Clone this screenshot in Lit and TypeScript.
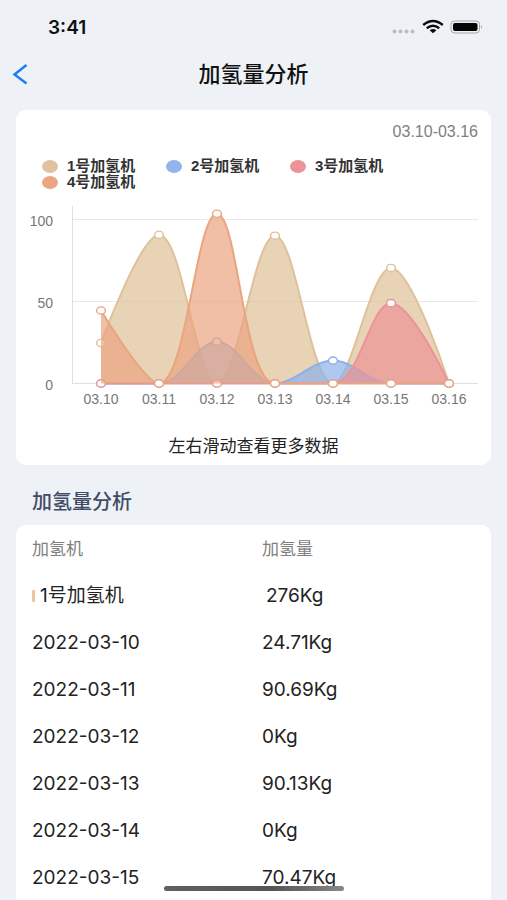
import { LitElement, html, svg, css } from "lit";
import { customElement, property } from "lit/decorators.js";

interface Series {
  name: string;
  tone: string;
  values: number[];
}

type Point = [number, number];

const DAYS = ["03.10", "03.11", "03.12", "03.13", "03.14", "03.15", "03.16"];

const SERIES: Series[] = [
  { name: "1号加氢机", tone: "sand", values: [24.71, 90.69, 0, 90.13, 0, 70.47, 0] },
  { name: "2号加氢机", tone: "blue", values: [0, 0, 25.5, 0, 14, 0, 0] },
  { name: "3号加氢机", tone: "rose", values: [0, 0, 0, 0, 0, 49, 0] },
  { name: "4号加氢机", tone: "coral", values: [44.5, 0, 103.5, 0, 0, 0, 0] },
];

const ROWS: [string, string][] = [
  ["2022-03-10", "24.71Kg"],
  ["2022-03-11", "90.69Kg"],
  ["2022-03-12", "0Kg"],
  ["2022-03-13", "90.13Kg"],
  ["2022-03-14", "0Kg"],
  ["2022-03-15", "70.47Kg"],
];

const clampBetween = (v: number, a: number, b: number) =>
  Math.max(Math.min(v, Math.max(a, b)), Math.min(a, b));

// Smooth cubic path whose control points never overshoot the neighbouring values.
function smoothPath(points: Point[], smooth = 0.36): string {
  let [cx, cy] = points[0];
  let d = `M${cx} ${cy}`;
  for (let i = 1; i < points.length; i++) {
    const [x, y] = points[i];
    const [px, py] = points[i - 1];
    let inX = x;
    let inY = y;
    let outX = x;
    let outY = y;
    if (i < points.length - 1) {
      const [nx, ny] = points[i + 1];
      const prevLen = Math.hypot(x - px, y - py);
      const nextLen = Math.hypot(nx - x, ny - y);
      const ratio = nextLen / (nextLen + prevLen);
      outX = clampBetween(x + (nx - px) * smooth * ratio, x, nx);
      outY = clampBetween(y + (ny - py) * smooth * ratio, y, ny);
      inX = clampBetween(x - ((outX - x) * prevLen) / nextLen, px, x);
      inY = clampBetween(y - ((outY - y) * prevLen) / nextLen, py, y);
      outX = x + ((x - inX) * nextLen) / prevLen;
      outY = y + ((y - inY) * nextLen) / prevLen;
    }
    d += `C${cx} ${cy} ${inX} ${inY} ${x} ${y}`;
    cx = outX;
    cy = outY;
  }
  return d;
}

@customElement("area-chart")
export class AreaChart extends LitElement {
  @property({ attribute: false }) series: Series[] = [];
  @property({ attribute: false }) days: string[] = [];

  static styles = css`
    :host { display: block; }
    .plot { display: block; width: 100%; height: auto; }
    .label { font: 14px "Liberation Sans", Arial, sans-serif; fill: #777; }
    .grid { stroke: #e8e9ee; stroke-width: 1; }
    .axis { stroke: #dcdfee; stroke-width: 1; }
    .area { fill: var(--tone); opacity: 0.7; }
    .line { fill: none; stroke: var(--tone); stroke-width: 2; }
    .dot { fill: #fff; stroke: var(--tone); stroke-width: 1.4; }
    .sand { --tone: #dfc198; }
    .blue { --tone: #8cb0e8; }
    .rose { --tone: #eb9396; }
    .coral { --tone: #eaa47f; }
  `;

  render() {
    const x = (i: number) => 85 + i * 58;
    const y = (v: number) => 184.5 - v * 1.64;
    return html`
      <svg class="plot" viewBox="0 0 475 216" role="img" aria-label="加氢量分析">
        ${[0, 50, 100].map(
          (v) => svg`
            <line class=${v ? "grid" : "axis"} x1="56" x2="462" y1=${y(v)} y2=${y(v)}></line>
            <text class="label" x="37" y=${y(v) + 6} text-anchor="end">${v}</text>`
        )}
        <line class="axis" x1="56.5" x2="56.5" y1="7" y2="185"></line>
        ${this.days.map(
          (d, i) => svg`<text class="label" x=${x(i)} y="205" text-anchor="middle">${d}</text>`
        )}
        ${this.series.map((s) => {
          const pts = s.values.map((v, i): Point => [x(i), y(v)]);
          const d = smoothPath(pts);
          return svg`
            <g class=${s.tone}>
              <path class="area" d=${`${d}L${x(pts.length - 1)} ${y(0)}L${x(0)} ${y(0)}Z`}></path>
              <path class="line" d=${d}></path>
              ${pts.map((p) => svg`<ellipse class="dot" cx=${p[0]} cy=${p[1]} rx="4.4" ry="3.6"></ellipse>`)}
            </g>`;
        })}
      </svg>
    `;
  }
}

@customElement("app-root")
export class AppRoot extends LitElement {
  static styles = css`
    :host {
      display: block;
      background: #eef2f6;
      color: #222;
      font-family: Inter, "Noto Sans CJK SC", sans-serif;
    }
    .status {
      display: flex;
      align-items: center;
      justify-content: space-between;
      height: 54px;
      padding: 0 24px 0 48px;
      font-size: 19px;
      font-weight: 600;
      color: #111;
    }
    .signals { display: flex; align-items: center; }
    .nav {
      display: grid;
      grid-template-columns: 48px 1fr 48px;
      align-items: center;
      height: 40px;
    }
    .back {
      display: flex;
      padding: 8px 12px;
      border: 0;
      background: none;
      cursor: pointer;
    }
    .title {
      margin: 0;
      text-align: center;
      font-size: 22px;
      line-height: 32px;
      font-weight: 500;
      color: #111;
    }
    .card {
      margin: 16px 16px 0;
      background: #fff;
      border-radius: 10px;
    }
    .range {
      margin: 0;
      padding: 12px 13px 0;
      text-align: right;
      font: 16px/20px "Liberation Sans", Arial, sans-serif;
      color: #808080;
    }
    .legend {
      display: flex;
      flex-wrap: wrap;
      margin: 0;
      padding: 16px 0 9px 26px;
      list-style: none;
      font: bold 15px/16px "Liberation Sans", "Noto Sans CJK SC", sans-serif;
      color: #333;
    }
    .key {
      display: flex;
      align-items: center;
      gap: 9px;
      width: 124px;
      height: 16px;
      white-space: nowrap;
    }
    .swatch { width: 16px; height: 13px; border-radius: 50%; }
    .sand { background: #dfc3a0; }
    .blue { background: #93b4e8; }
    .rose { background: #eb9396; }
    .coral { background: #eba681; }
    .hint {
      margin: 0;
      padding: 18px 0 6px;
      text-align: center;
      font-size: 17px;
      line-height: 26px;
    }
    .section {
      margin: 0;
      padding: 22px 32px 7px;
      font-size: 20px;
      line-height: 31px;
      font-weight: 500;
      color: #414b66;
    }
    .sheet {
      margin: 0 16px;
      background: #fff;
      border-radius: 10px 10px 0 0;
    }
    .table {
      width: 100%;
      table-layout: fixed;
      border-collapse: collapse;
      text-align: left;
      font-size: 19px;
      line-height: 24px;
    }
    .table th, .table td {
      box-sizing: border-box;
      height: 47px;
      padding: 2px 0 0 16px;
      font-weight: 400;
    }
    .table .head { height: 46px; font-size: 17px; color: #808080; }
    .first { width: 230px; }
    .machine { display: flex; align-items: center; gap: 5px; }
    .mark { width: 3px; height: 12px; background: #f2c4a0; }
    .table .total { padding-left: 20px; }
    .home {
      position: fixed;
      left: 50%;
      bottom: 9px;
      width: 180px;
      height: 5px;
      margin-left: -90px;
      border-radius: 3px;
      background: linear-gradient(90deg, #606060, #555 60%, #888);
    }
  `;

  render() {
    return html`
      <div class="status">
        <span>3:41</span>
        <svg class="signals" width="92" height="20" viewBox="0 0 92 20" aria-hidden="true">
          <g fill="#bbbdc0">
            <circle cx="3.5" cy="14.5" r="2"></circle>
            <circle cx="9.5" cy="14.5" r="2"></circle>
            <circle cx="15.5" cy="14.5" r="2"></circle>
            <circle cx="21.5" cy="14.5" r="2"></circle>
          </g>
          <g fill="none" stroke="#0b0b0d" stroke-width="2.4">
            <path d="M32.2 8Q42 -0.2 51.8 8"></path>
            <path d="M35.8 11.3Q42 6.2 48.2 11.3"></path>
          </g>
          <path d="M38.6 13.2Q42 10.6 45.4 13.2L42 16.3Z" fill="#0b0b0d"></path>
          <rect x="60" y="4" width="28.5" height="12" rx="3.6" fill="none" stroke="#a4a6a9"></rect>
          <rect x="62" y="6" width="24.5" height="8" rx="2" fill="#050505"></rect>
          <path d="M90 8Q92 10 90 12Z" fill="#a4a6a9"></path>
        </svg>
      </div>
      <nav class="nav">
        <button class="back" aria-label="返回">
          <svg width="17" height="22" viewBox="0 0 17 22" fill="none" stroke="#1a7df5" stroke-width="2.4">
            <path d="M14.5 2L2.5 11.5L14.5 20.5"></path>
          </svg>
        </button>
        <h1 class="title">加氢量分析</h1>
      </nav>
      <section class="card">
        <p class="range">03.10-03.16</p>
        <ul class="legend">
          ${SERIES.map(
            (s) => html`<li class="key"><span class="swatch ${s.tone}"></span>${s.name}</li>`
          )}
        </ul>
        <area-chart .series=${SERIES} .days=${DAYS}></area-chart>
        <p class="hint">左右滑动查看更多数据</p>
      </section>
      <h2 class="section">加氢量分析</h2>
      <section class="sheet">
        <table class="table">
          <thead>
            <tr>
              <th class="head first" scope="col">加氢机</th>
              <th class="head" scope="col">加氢量</th>
            </tr>
          </thead>
          <tbody>
            <tr>
              <th scope="row"><span class="machine"><span class="mark"></span>1号加氢机</span></th>
              <td class="total">276Kg</td>
            </tr>
            ${ROWS.map(([day, amount]) => html`<tr><td>${day}</td><td>${amount}</td></tr>`)}
          </tbody>
        </table>
      </section>
      <div class="home"></div>
    `;
  }
}
